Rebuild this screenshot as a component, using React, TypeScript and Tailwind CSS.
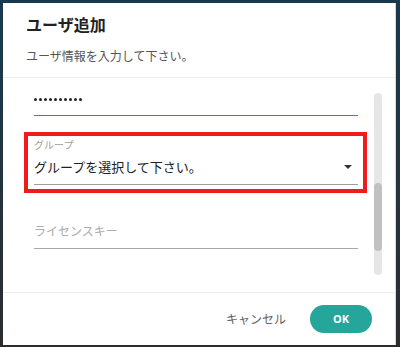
export default function App() {
  return (
    <div className="w-[400px] h-[347px] overflow-hidden bg-linear-to-b from-[#163a4e] via-[#23343f] to-[#2b2c2e] pt-[3px] pl-[3px] font-['Noto_Sans_CJK_JP',sans-serif]">
      <div className="w-[393px] h-[342px] bg-white flex flex-col border-r border-[#d8d8d8]">
        {/* header */}
        <div className="h-[75px] border-b border-[#eeeeee] pt-[9px] px-[23px]">
          <h1 className="text-[16px] leading-[24px] font-bold text-[#212121]">ユーザ追加</h1>
          <p className="mt-[10px] text-[12px] leading-[20px] text-[#555555]">ユーザ情報を入力して下さい。</p>
        </div>

        {/* body */}
        <div className="h-[214px] flex overflow-hidden">
          <div className="pl-[21px] w-[364px] flex flex-col">
            {/* password */}
            <div className="w-[343px] border-4 border-transparent pl-[6px] pr-[5px]">
              <div className="pt-[7px] pb-[6px] border-b border-[#2a9d36]">
                <div className="h-[20px] flex items-center gap-[2px]">
                  {Array.from({ length: 10 }).map((_, i) => (
                    <span key={i} className="w-[3px] h-[3px] rounded-full bg-[#222222]" />
                  ))}
                </div>
              </div>
            </div>

            {/* group (highlighted) */}
            <div className="mt-[12px] w-[343px] border-4 border-[#f21b1b] pl-[6px] pr-[5px] pb-[4px]">
              <div className="pt-[3px] pb-[7px] border-b border-[#9e9e9e]">
                <div className="text-[10px] leading-[12px] text-[#a0a0a0]">グループ</div>
                <div className="mt-[6px] h-[20px] flex items-center justify-between pr-[6px]">
                  <span className="text-[13px] leading-[20px] text-[#212121]">グループを選択して下さい。</span>
                  <span className="w-0 h-0 border-l-[4px] border-r-[4px] border-t-[4px] border-l-transparent border-r-transparent border-t-[#333333]" />
                </div>
              </div>
            </div>

            {/* license key */}
            <div className="mt-[3px] w-[343px] border-4 border-transparent pl-[6px] pr-[5px]">
              <div className="pt-[21px] pb-[7px] border-b border-[#a8a8a8]">
                <div className="h-[20px] text-[12px] leading-[20px] text-[#acacac]">ライセンスキー</div>
              </div>
            </div>
          </div>

          {/* scrollbar */}
          <div className="ml-[7px] mt-[15px] w-[8px] h-[182px] rounded-full bg-[#e6e6e6] flex flex-col">
            <div className="mt-[90px] h-[68px] w-[8px] rounded-full bg-[#c1c1c1]" />
          </div>
        </div>

        {/* footer */}
        <div className="flex-1 border-t border-[#eeeeee] flex items-center justify-end pr-[23px] gap-[24px]">
          <button className="text-[12px] text-[#616161]">キャンセル</button>
          <button className="w-[62px] h-[28px] rounded-full bg-[#26a69a] text-white text-[11px] font-bold font-['Noto_Sans',sans-serif]">
            OK
          </button>
        </div>
      </div>
    </div>
  );
}
